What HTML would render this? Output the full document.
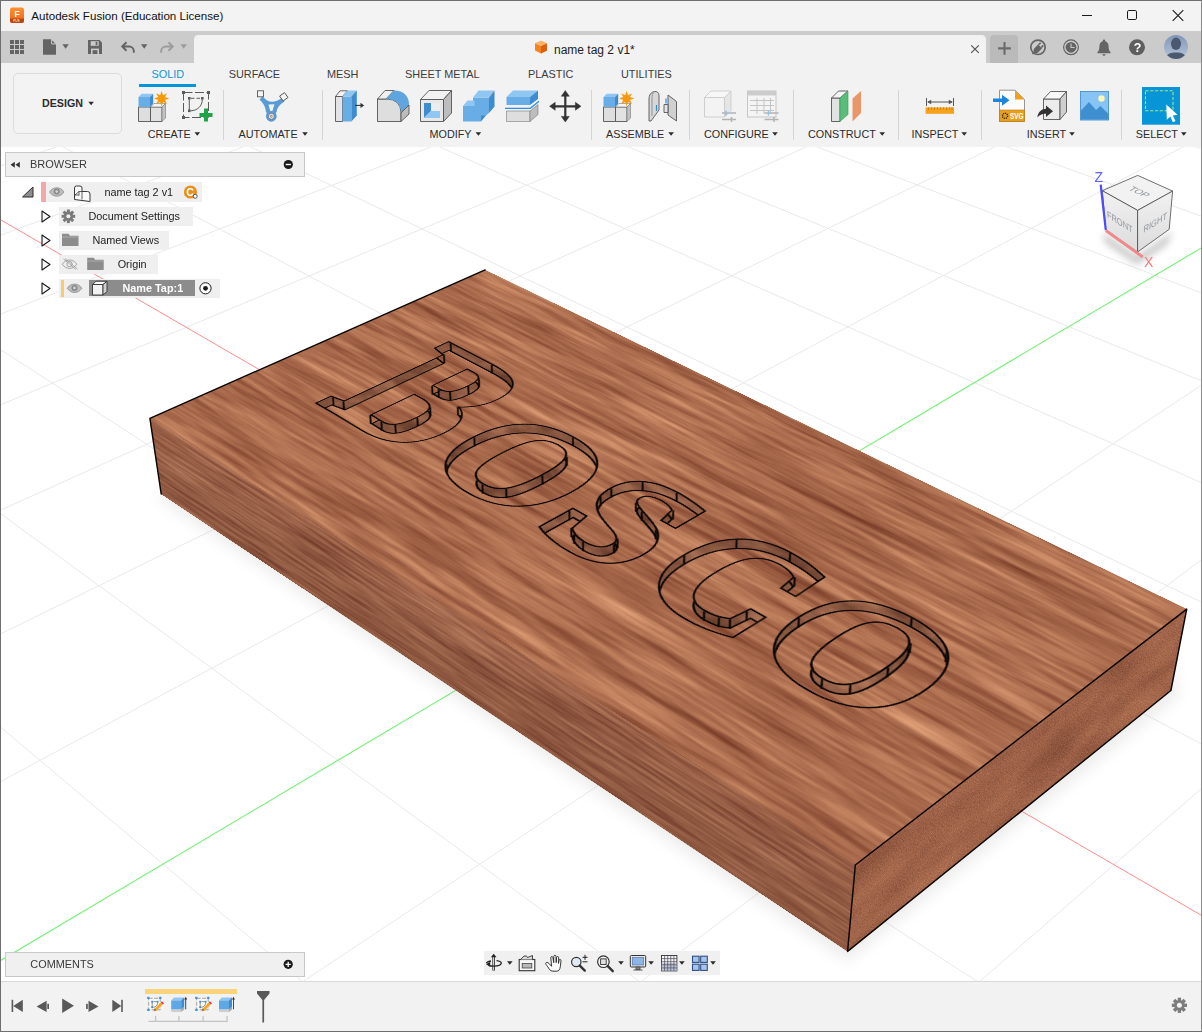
<!DOCTYPE html>
<html><head><meta charset="utf-8"><title>Autodesk Fusion</title>
<style>
*{box-sizing:border-box;margin:0;padding:0}
html,body{width:1202px;height:1032px;overflow:hidden;background:#f2f2f2;font-family:"Liberation Sans",sans-serif;}
#win{position:absolute;left:0;top:0;width:1202px;height:1032px;overflow:hidden;background:#f2f2f2}
#grid,#edges{position:absolute;left:0;top:0}
.face{position:absolute;left:0;top:0;transform-origin:0 0;overflow:hidden}
.face svg{display:block}
#titlebar{position:absolute;left:0;top:0;width:1202px;height:31px;background:#f3f3f3}
#title{position:absolute;left:31.3px;top:9.3px;font-size:11.6px;color:#111;white-space:nowrap;letter-spacing:0}
#qat{position:absolute;left:0;top:31px;width:1202px;height:32px;background:#cbcbcb}
#doctab{position:absolute;left:194px;top:35px;width:792px;height:28px;background:#f2f2f2;border-radius:4.5px 4.5px 0 0}
#toolbar{position:absolute;left:0;top:63px;width:1202px;height:84px;background:#f2f2f2}
.abs{position:absolute}
.tabl{position:absolute;top:68.4px;font-size:10.9px;color:#3c3c3c;white-space:nowrap}
.grpl{position:absolute;top:127.7px;font-size:10.8px;color:#2b2b2b;white-space:nowrap}
.sep{position:absolute;top:90px;width:1px;height:50px;background:#d4d4d4}
#timeline{position:absolute;left:0;top:981px;width:1202px;height:51px;background:#f2f2f2;border-top:1px solid #d9d9d9}
#border{position:absolute;left:0;top:0;width:1202px;height:1032px;border:1px solid #6e6e6e;border-right-color:#8a8a8a;pointer-events:none}
.panelhdr{position:absolute;background:#f0f0f0;border:1px solid #c8c8c8;font-size:11.3px;color:#3a3a3a}
.row{position:absolute;height:19px;background:#efefef}
.rowt{position:absolute;font-size:10.85px;color:#222;white-space:nowrap}
#icons{position:absolute;left:0;top:0}
</style></head>
<body><div id="win">
<svg id="grid" width="1202" height="1032" viewBox="0 0 1202 1032">
<defs>
<clipPath id="vp"><rect x="1" y="147" width="1200" height="834"/></clipPath>
<filter id="blur8" x="-20%" y="-20%" width="140%" height="140%"><feGaussianBlur stdDeviation="7"/></filter>
</defs>
<rect x="1" y="147" width="1200" height="834" fill="#fff"/>
<g clip-path="url(#vp)">
<g stroke="#e9e9e9" stroke-width="1" fill="none"><line x1="893.9" y1="-586.1" x2="-18080.3" y2="2156.8"/><line x1="323.3" y1="-584.4" x2="21418.2" y2="2322.2"/><line x1="926.1" y1="-582.6" x2="-19998.5" y2="2518.9"/><line x1="291.3" y1="-580.6" x2="23812.9" y2="2746.5"/><line x1="959.0" y1="-579.0" x2="-22433.5" y2="2978.6"/><line x1="258.6" y1="-576.8" x2="26930.4" y2="3299.0"/><line x1="992.8" y1="-575.3" x2="-25626.6" y2="3581.4"/><line x1="225.1" y1="-573.0" x2="31156.4" y2="4047.8"/><line x1="1027.3" y1="-571.5" x2="-29997.0" y2="4406.4"/><line x1="190.9" y1="-569.0" x2="37209.7" y2="5120.5"/><line x1="1062.7" y1="-567.7" x2="-36343.2" y2="5604.5"/><line x1="155.9" y1="-564.9" x2="46602.7" y2="6784.9"/><line x1="1098.9" y1="-563.7" x2="-46396.5" y2="7502.3"/><line x1="120.0" y1="-560.8" x2="63151.7" y2="9717.5"/><line x1="1136.0" y1="-559.7" x2="-64744.5" y2="10966.0"/><line x1="83.2" y1="-556.5" x2="100066.3" y2="16258.9"/><line x1="1174.1" y1="-555.5" x2="-108863.0" y2="19294.7"/><line x1="45.6" y1="-552.1" x2="128214.8" y2="21701.0"/><line x1="1213.1" y1="-551.3" x2="-123892.7" y2="22743.5"/><line x1="7.0" y1="-547.6" x2="122515.2" y2="21432.7"/><line x1="1253.0" y1="-546.9" x2="-120788.4" y2="22934.0"/><line x1="-32.6" y1="-543.0" x2="116957.3" y2="21171.1"/><line x1="1294.1" y1="-542.4" x2="-117629.2" y2="23127.9"/><line x1="-73.1" y1="-538.3" x2="111535.7" y2="20915.9"/><line x1="1336.2" y1="-537.8" x2="-114413.8" y2="23325.2"/><line x1="-114.7" y1="-533.5" x2="106245.5" y2="20666.8"/><line x1="1379.4" y1="-533.1" x2="-111140.6" y2="23526.0"/><line x1="-157.4" y1="-528.6" x2="101082.0" y2="20423.8"/><line x1="1423.8" y1="-528.2" x2="-107808.1" y2="23730.5"/><line x1="-201.2" y1="-523.5" x2="96040.7" y2="20186.5"/><line x1="1469.3" y1="-523.3" x2="-104414.6" y2="23938.7"/><line x1="-246.2" y1="-518.2" x2="91117.3" y2="19954.7"/><line x1="1516.2" y1="-518.1" x2="-100958.4" y2="24150.7"/><line x1="-292.4" y1="-512.9" x2="101795.2" y2="23348.2"/><line x1="1564.3" y1="-512.9" x2="-82459.8" y2="20602.7"/><line x1="-339.9" y1="-507.4" x2="96074.0" y2="23040.1"/><line x1="1613.9" y1="-507.5" x2="-79291.6" y2="20759.7"/><line x1="-388.7" y1="-501.7" x2="90504.2" y2="22740.2"/><line x1="1664.8" y1="-501.9" x2="-76072.3" y2="20919.2"/><line x1="-438.9" y1="-495.9" x2="85079.9" y2="22448.1"/><line x1="1717.3" y1="-496.2" x2="-72800.7" y2="21081.2"/><line x1="-490.5" y1="-489.9" x2="79795.4" y2="22163.6"/><line x1="1771.3" y1="-490.3" x2="-69475.5" y2="21246.0"/><line x1="-543.6" y1="-483.7" x2="74645.3" y2="21886.2"/><line x1="1826.9" y1="-484.2" x2="-66095.4" y2="21413.4"/><line x1="-598.3" y1="-477.4" x2="69624.7" y2="21615.9"/><line x1="1884.2" y1="-477.9" x2="-62659.0" y2="21583.7"/><line x1="-654.7" y1="-470.8" x2="64728.6" y2="21352.2"/><line x1="1943.3" y1="-471.5" x2="-59164.9" y2="21756.8"/><line x1="-712.7" y1="-464.1" x2="59952.6" y2="21095.1"/><line x1="2004.3" y1="-464.8" x2="-55611.6" y2="21932.8"/><line x1="-772.6" y1="-457.1" x2="55292.2" y2="20844.1"/><line x1="2067.2" y1="-457.9" x2="-51997.6" y2="22111.8"/><line x1="-834.3" y1="-450.0" x2="50743.3" y2="20599.2"/><line x1="2132.2" y1="-450.8" x2="-48321.3" y2="22294.0"/><line x1="-898.0" y1="-442.6" x2="46302.0" y2="20360.0"/><line x1="2199.4" y1="-443.5" x2="-44581.2" y2="22479.3"/><line x1="-963.8" y1="-434.9" x2="41964.4" y2="20126.5"/><line x1="2268.8" y1="-435.9" x2="-40775.5" y2="22667.8"/><line x1="-1031.7" y1="-427.1" x2="44679.1" y2="23544.0"/><line x1="2414.8" y1="-420.0" x2="-32960.3" y2="23055.0"/><line x1="-1174.5" y1="-410.5" x2="34909.8" y2="22931.5"/><line x1="2491.7" y1="-411.6" x2="-28947.2" y2="23253.8"/><line x1="-1249.7" y1="-401.8" x2="30216.4" y2="22637.2"/><line x1="2571.4" y1="-402.9" x2="-24861.2" y2="23456.2"/><line x1="-1327.4" y1="-392.7" x2="25643.7" y2="22350.5"/><line x1="2654.0" y1="-393.9" x2="-20700.3" y2="23662.3"/><line x1="-1408.0" y1="-383.4" x2="21187.3" y2="22071.1"/><line x1="2739.7" y1="-384.5" x2="-16462.4" y2="23872.3"/><line x1="-1491.5" y1="-373.7" x2="16842.8" y2="21798.7"/><line x1="2828.7" y1="-374.8" x2="-9862.6" y2="20357.2"/><line x1="-1578.1" y1="-363.6" x2="12606.0" y2="21533.1"/><line x1="2921.2" y1="-364.7" x2="-6107.3" y2="20512.5"/><line x1="-1668.1" y1="-353.2" x2="8472.9" y2="21273.9"/><line x1="3017.3" y1="-354.2" x2="-2291.2" y2="20670.2"/><line x1="-1761.4" y1="-342.3" x2="4439.8" y2="21021.1"/><line x1="3117.3" y1="-343.2" x2="1586.9" y2="20830.6"/><line x1="-1858.5" y1="-331.1" x2="503.1" y2="20774.2"/><line x1="3221.4" y1="-331.9" x2="5528.7" y2="20993.6"/><line x1="-1959.5" y1="-319.4" x2="-3340.6" y2="20533.2"/><line x1="3330.0" y1="-320.0" x2="9535.8" y2="21159.3"/><line x1="-2064.6" y1="-307.1" x2="-7094.6" y2="20297.9"/><line x1="3443.2" y1="-307.6" x2="13609.6" y2="21327.7"/><line x1="-2174.2" y1="-294.4" x2="-12310.3" y2="23739.3"/><line x1="3561.4" y1="-294.7" x2="17752.1" y2="21499.0"/><line x1="-2288.4" y1="-281.2" x2="-16492.5" y2="23426.7"/><line x1="3684.9" y1="-281.2" x2="21964.8" y2="21673.2"/><line x1="-2407.7" y1="-267.3" x2="-20564.4" y2="23122.3"/><line x1="3814.2" y1="-267.1" x2="26249.6" y2="21850.3"/><line x1="-2532.2" y1="-252.9" x2="-24530.1" y2="22825.8"/><line x1="3949.5" y1="-252.3" x2="30608.4" y2="22030.6"/><line x1="-2662.5" y1="-237.7" x2="-28393.9" y2="22537.0"/><line x1="4091.4" y1="-236.8" x2="35043.1" y2="22213.9"/><line x1="-2798.9" y1="-221.9" x2="-32159.5" y2="22255.5"/><line x1="4240.3" y1="-220.6" x2="39555.7" y2="22400.5"/><line x1="-2941.8" y1="-205.3" x2="-35830.7" y2="21981.1"/></g>
<line x1="-1101.9" y1="-418.9" x2="39729.0" y2="23233.6" stroke="#ff8c8c" stroke-width="1"/>
<line x1="2340.5" y1="-428.1" x2="-36902.5" y2="22859.7" stroke="#7df07d" stroke-width="1.2"/>
<polygon points="157.2,498.0 847.6,961.4 1178.9,696.5 1170.9,660.5 487.9,340.6" fill="#8a8480" opacity="0.14" filter="url(#blur8)"/>
<polygon points="485.1,269.9 149.9,418.3 161.2,494.0 847.6,951.4 1170.9,690.5 1186.7,609.1" fill="#a2644a"/>
</g>
</svg>
<div id="topface" class="face" style="width:1000px;height:500px;transform:matrix3d(0.433727421,0.201719515,0,-0.000225726467,-0.703676503,0.203516032,0,-0.000222788714,0,0,1,0,485.077873,269.915069,0,1)">
<svg width="1000" height="500" viewBox="0 0 1000 500" font-family="'Liberation Serif',serif" font-weight="bold" stroke-linejoin="miter" stroke-miterlimit="3">
<defs>
<filter id="woodtop" filterUnits="userSpaceOnUse" x="0" y="0" width="1000" height="500" color-interpolation-filters="sRGB">
<feTurbulence type="fractalNoise" baseFrequency="0.009 0.13" numOctaves="4" seed="7"/><feColorMatrix type="matrix" values="1 0 0 0 0 0 1 0 0 0 0 0 1 0 0 0 0 0 0 1" result="n1"/>
<feTurbulence type="fractalNoise" baseFrequency="0.004 0.045" numOctaves="3" seed="11"/><feColorMatrix type="matrix" values="1 0 0 0 0 0 1 0 0 0 0 0 1 0 0 0 0 0 0 1" result="n2"/>
<feComposite in="n1" in2="n2" operator="arithmetic" k1="0" k2="0.65" k3="0.55" k4="-0.1" result="n"/>
<feColorMatrix in="n" type="matrix" values="0.5067 0 0 0 0.4133  0.4867 0 0 0 0.1782  0.3933 0 0 0 0.1073  0 0 0 0 1" result="w"/></filter>
<filter id="woodtxt" filterUnits="userSpaceOnUse" x="0" y="0" width="1000" height="500" color-interpolation-filters="sRGB">
<feTurbulence type="fractalNoise" baseFrequency="0.009 0.13" numOctaves="4" seed="7"/><feColorMatrix type="matrix" values="1 0 0 0 0 0 1 0 0 0 0 0 1 0 0 0 0 0 0 1" result="n1"/>
<feTurbulence type="fractalNoise" baseFrequency="0.004 0.045" numOctaves="3" seed="11"/><feColorMatrix type="matrix" values="1 0 0 0 0 0 1 0 0 0 0 0 1 0 0 0 0 0 0 1" result="n2"/>
<feComposite in="n1" in2="n2" operator="arithmetic" k1="0" k2="0.65" k3="0.55" k4="-0.1" result="n"/>
<feColorMatrix in="n" type="matrix" values="0.5067 0 0 0 0.4133  0.4867 0 0 0 0.1782  0.3933 0 0 0 0.1073  0 0 0 0 1" result="w"/><feComposite in="w" in2="SourceAlpha" operator="in"/></filter>
<filter id="woodwall" filterUnits="userSpaceOnUse" x="0" y="0" width="1000" height="500" color-interpolation-filters="sRGB">
<feTurbulence type="fractalNoise" baseFrequency="0.03 0.05" numOctaves="4" seed="3"/><feColorMatrix type="matrix" values="1 0 0 0 0 0 1 0 0 0 0 0 1 0 0 0 0 0 0 1" result="n1"/>
<feTurbulence type="fractalNoise" baseFrequency="0.01 0.02" numOctaves="3" seed="5"/><feColorMatrix type="matrix" values="1 0 0 0 0 0 1 0 0 0 0 0 1 0 0 0 0 0 0 1" result="n2"/>
<feComposite in="n1" in2="n2" operator="arithmetic" k1="0" k2="0.65" k3="0.55" k4="-0.1" result="n"/>
<feColorMatrix in="n" type="matrix" values="0.5271 0 0 0 0.2620  0.4141 0 0 0 0.1263  0.3263 0 0 0 0.0800  0 0 0 0 1" result="w"/><feComposite in="w" in2="SourceAlpha" operator="in"/></filter>
<mask id="tmask" maskUnits="userSpaceOnUse" x="0" y="0" width="1000" height="500"><text y="344.00" fill="#fff" stroke="#fff" stroke-width="10.0"><tspan x="105.29" font-size="282.80" textLength="148.92" lengthAdjust="spacingAndGlyphs">B</tspan><tspan x="277.88" font-size="212.80" textLength="161.24" lengthAdjust="spacingAndGlyphs">O</tspan><tspan x="452.79" font-size="212.80" textLength="117.16" lengthAdjust="spacingAndGlyphs">S</tspan><tspan x="592.60" font-size="212.80" textLength="139.07" lengthAdjust="spacingAndGlyphs">C</tspan><tspan x="740.81" font-size="212.80" textLength="162.39" lengthAdjust="spacingAndGlyphs">O</tspan></text></mask>
</defs>
<rect width="1000" height="500" fill="#a9694b"/>
<rect width="1000" height="500" filter="url(#woodtop)"/>
<g>
<text y="344.00" fill="#0b0603" stroke="#0b0603" stroke-width="14.6"><tspan x="105.29" font-size="282.80" textLength="148.92" lengthAdjust="spacingAndGlyphs">B</tspan><tspan x="277.88" font-size="212.80" textLength="161.24" lengthAdjust="spacingAndGlyphs">O</tspan><tspan x="452.79" font-size="212.80" textLength="117.16" lengthAdjust="spacingAndGlyphs">S</tspan><tspan x="592.60" font-size="212.80" textLength="139.07" lengthAdjust="spacingAndGlyphs">C</tspan><tspan x="740.81" font-size="212.80" textLength="162.39" lengthAdjust="spacingAndGlyphs">O</tspan></text>
<g filter="url(#woodwall)"><text y="344.00" fill="#85543d" stroke="#85543d" stroke-width="10.0"><tspan x="105.29" font-size="282.80" textLength="148.92" lengthAdjust="spacingAndGlyphs">B</tspan><tspan x="277.88" font-size="212.80" textLength="161.24" lengthAdjust="spacingAndGlyphs">O</tspan><tspan x="452.79" font-size="212.80" textLength="117.16" lengthAdjust="spacingAndGlyphs">S</tspan><tspan x="592.60" font-size="212.80" textLength="139.07" lengthAdjust="spacingAndGlyphs">C</tspan><tspan x="740.81" font-size="212.80" textLength="162.39" lengthAdjust="spacingAndGlyphs">O</tspan></text></g>
<g mask="url(#tmask)">
<text y="355.35" fill="#0b0603" stroke="#0b0603" stroke-width="14.5"><tspan x="120.93" font-size="280.11" textLength="147.50" lengthAdjust="spacingAndGlyphs">B</tspan><tspan x="291.87" font-size="210.78" textLength="159.71" lengthAdjust="spacingAndGlyphs">O</tspan><tspan x="465.12" font-size="210.78" textLength="116.05" lengthAdjust="spacingAndGlyphs">S</tspan><tspan x="603.60" font-size="210.78" textLength="137.75" lengthAdjust="spacingAndGlyphs">C</tspan><tspan x="750.39" font-size="210.78" textLength="160.84" lengthAdjust="spacingAndGlyphs">O</tspan></text>
<g filter="url(#woodtxt)"><text y="355.35" fill="#a9694b" stroke="#a9694b" stroke-width="9.9"><tspan x="120.93" font-size="280.11" textLength="147.50" lengthAdjust="spacingAndGlyphs">B</tspan><tspan x="291.87" font-size="210.78" textLength="159.71" lengthAdjust="spacingAndGlyphs">O</tspan><tspan x="465.12" font-size="210.78" textLength="116.05" lengthAdjust="spacingAndGlyphs">S</tspan><tspan x="603.60" font-size="210.78" textLength="137.75" lengthAdjust="spacingAndGlyphs">C</tspan><tspan x="750.39" font-size="210.78" textLength="160.84" lengthAdjust="spacingAndGlyphs">O</tspan></text></g>
<g stroke="#0b0603" stroke-width="2" fill="none"><path d="M196.0 204.5L210.8 217.2"/><path d="M191.5 184.2L206.4 197.1"/><path d="M167.2 233.5L182.2 245.9"/><path d="M178.1 233.5L193.1 245.9"/><path d="M191.4 227.9L206.2 240.3"/><path d="M207.0 290.0L221.7 301.9"/><path d="M200.9 265.8L215.6 277.9"/><path d="M167.2 324.1L182.2 335.6"/><path d="M186.9 324.6L201.7 336.2"/><path d="M201.6 317.2L216.3 328.8"/><path d="M108.0 329.0L123.6 340.5"/><path d="M122.9 326.1L138.3 337.6"/><path d="M122.9 176.6L138.3 189.6"/><path d="M109.0 153.8L124.6 167.0"/><path d="M180.0 153.8L194.9 167.0"/><path d="M221.8 243.4L236.3 255.7"/><path d="M358.5 330.7L371.8 342.2"/><path d="M382.3 318.8L395.3 330.4"/><path d="M390.4 274.2L403.3 286.2"/><path d="M382.3 230.1L395.3 242.6"/><path d="M283.0 273.9L297.0 285.9"/><path d="M358.7 198.1L371.9 210.8"/><path d="M302.4 331.2L316.2 342.7"/><path d="M459.0 301.3L471.3 313.1"/><path d="M482.3 321.3L494.3 332.8"/><path d="M492.6 327.5L504.5 339.0"/><path d="M508.8 330.6L520.6 342.1"/><path d="M533.4 311.0L544.9 322.7"/><path d="M529.3 301.7L540.9 313.5"/><path d="M463.4 260.1L475.6 272.3"/><path d="M459.8 240.8L472.1 253.1"/><path d="M474.3 208.6L486.5 221.3"/><path d="M513.5 198.1L525.3 210.8"/><path d="M533.6 224.6L545.1 237.1"/><path d="M496.2 241.3L508.1 253.6"/><path d="M512.2 249.1L524.0 261.3"/><path d="M545.6 263.1L557.0 275.2"/><path d="M597.0 275.8L608.0 287.8"/><path d="M615.5 218.1L626.2 230.6"/><path d="M669.2 198.1L679.5 210.8"/><path d="M699.4 226.2L709.3 238.7"/><path d="M674.5 330.4L684.7 341.9"/><path d="M691.2 327.6L701.2 339.1"/><path d="M700.7 322.3L710.7 333.9"/><path d="M703.5 301.4L713.4 313.1"/><path d="M822.1 330.7L830.9 342.2"/><path d="M846.0 318.8L854.6 330.4"/><path d="M854.2 274.2L862.7 286.2"/><path d="M846.0 230.1L854.6 242.6"/><path d="M746.0 274.3L755.5 286.3"/><path d="M822.2 198.1L831.0 210.8"/><path d="M878.4 217.4L886.7 230.0"/></g>
</g>
</g>
</svg></div>
<div id="leftface" class="face" style="width:1000px;height:100px;transform:matrix3d(0.488098882,0.227006791,0,-0.00025402322,0.152110334,0.879405047,0,0.000247115136,0,0,1,0,149.942354,418.265501,0,1)">
<svg width="1000" height="100" viewBox="0 0 1000 100"><defs><filter id="woodleft" x="0" y="0" width="100%" height="100%" color-interpolation-filters="sRGB">
<feTurbulence type="fractalNoise" baseFrequency="0.012 0.24" numOctaves="4" seed="5"/><feColorMatrix type="matrix" values="1 0 0 0 0 0 1 0 0 0 0 0 1 0 0 0 0 0 0 1" result="n1"/>
<feTurbulence type="fractalNoise" baseFrequency="0.005 0.06" numOctaves="2" seed="13"/><feColorMatrix type="matrix" values="1 0 0 0 0 0 1 0 0 0 0 0 1 0 0 0 0 0 0 1" result="n2"/>
<feComposite in="n1" in2="n2" operator="arithmetic" k1="0" k2="0.7" k3="0.5" k4="-0.1" result="n"/>
<feColorMatrix in="n" type="matrix" values="0.4353 0 0 0 0.3902  0.4118 0 0 0 0.1745  0.3294 0 0 0 0.1176  0 0 0 0 1"/>
</filter>
<linearGradient id="lfg" x1="0" y1="0" x2="0" y2="1"><stop offset="0" stop-color="#000" stop-opacity="0"/><stop offset="1" stop-color="#2a1208" stop-opacity="0.12"/></linearGradient></defs>
<rect width="1000" height="100" fill="#a06246"/>
<rect width="1000" height="100" filter="url(#woodleft)"/>
<rect width="1000" height="100" fill="url(#lfg)"/>
</svg></div>
<div id="rightface" class="face" style="width:500px;height:100px;transform:matrix3d(1.06154565,-0.307018291,0,0.000336092492,0.203907599,1.17886383,0,0.000331263845,0,0,1,0,855.30978,865.003187,0,1)">
<svg width="500" height="100" viewBox="0 0 500 100"><defs>
<filter id="woodend" x="0" y="0" width="100%" height="100%" color-interpolation-filters="sRGB">
<feTurbulence type="fractalNoise" baseFrequency="0.9 0.9" numOctaves="2" seed="3"/><feColorMatrix type="matrix" values="1 0 0 0 0 0 1 0 0 0 0 0 1 0 0 0 0 0 0 1" result="n1"/>
<feTurbulence type="fractalNoise" baseFrequency="0.012 0.03" numOctaves="2" seed="9"/><feColorMatrix type="matrix" values="1 0 0 0 0 0 1 0 0 0 0 0 1 0 0 0 0 0 0 1" result="n2"/>
<feComposite in="n1" in2="n2" operator="arithmetic" k1="0" k2="0.55" k3="0.3" k4="0.075" result="n"/>
<feColorMatrix in="n" type="matrix" values="0.5882 0 0 0 0.2941  0.4706 0 0 0 0.1255  0.3647 0 0 0 0.0804  0 0 0 0 1"/>
</filter></defs>
<rect width="500" height="100" fill="#96593f"/>
<rect width="500" height="100" filter="url(#woodend)"/>
</svg></div>
<svg id="edges" width="1202" height="1032" viewBox="0 0 1202 1032">
<g stroke="#080402" stroke-width="1.45" fill="none" stroke-linejoin="round" stroke-linecap="round">
<polyline points="485.1,269.9 149.9,418.3 161.2,494.0"/>
<polygon points="855.3,865.0 1186.7,609.1 1170.9,690.5 847.6,951.4"/>
</g></svg>
<div id="titlebar"></div>
<div id="title">Autodesk Fusion (Education License)</div>
<div id="qat"></div>
<div id="doctab"></div>
<div class="abs" style="left:990px;top:35px;width:28px;height:28px;background:#bababa;border-radius:4px 4px 0 0"></div>
<div class="abs" id="doctitle" style="left:554px;top:43px;font-size:12px;color:#222;white-space:nowrap">name tag 2 v1*</div>
<div id="toolbar"></div>
<div class="abs" style="left:13px;top:73px;width:109px;height:61px;border:1px solid #dcdcdc;border-radius:5px;background:#f3f3f3"></div>
<div class="abs" id="design" style="left:42px;top:97px;font-size:10.7px;font-weight:bold;color:#2d2d2d;white-space:nowrap">DESIGN</div>
<div class="tabl" id="t_solid" style="left:151.5px;color:#0e96d8">SOLID</div>
<div class="abs" style="left:139.3px;top:83.7px;width:57px;height:3px;background:#0696d7"></div>
<div class="tabl" id="t_surface" style="left:228.7px">SURFACE</div>
<div class="tabl" id="t_mesh" style="left:327px">MESH</div>
<div class="tabl" id="t_sheet" style="left:405px">SHEET METAL</div>
<div class="tabl" id="t_plastic" style="left:528px">PLASTIC</div>
<div class="tabl" id="t_util" style="left:621px">UTILITIES</div>
<div class="grpl" id="g_create" style="left:147.8px">CREATE</div>
<div class="grpl" id="g_automate" style="left:238.6px">AUTOMATE</div>
<div class="grpl" id="g_modify" style="left:429.5px">MODIFY</div>
<div class="grpl" id="g_assemble" style="left:606px">ASSEMBLE</div>
<div class="grpl" id="g_configure" style="left:704px">CONFIGURE</div>
<div class="grpl" id="g_construct" style="left:808px">CONSTRUCT</div>
<div class="grpl" id="g_inspect" style="left:911.5px">INSPECT</div>
<div class="grpl" id="g_insert" style="left:1026.8px">INSERT</div>
<div class="grpl" id="g_select" style="left:1135.8px">SELECT</div>
<div class="sep" style="left:222.5px"></div>
<div class="sep" style="left:322px"></div>
<div class="sep" style="left:590.5px"></div>
<div class="sep" style="left:688.5px"></div>
<div class="sep" style="left:793px"></div>
<div class="sep" style="left:897.5px"></div>
<div class="sep" style="left:980.5px"></div>
<div class="sep" style="left:1120.5px"></div>
<div class="panelhdr" style="left:5px;top:152px;width:300px;height:25px"></div>
<div class="abs" id="l_browser" style="left:30px;top:157.5px;font-size:11px;color:#3a3a3a">BROWSER</div>
<div class="row" style="left:41px;top:182px;width:160.5px;height:20px"></div>
<div class="abs" style="left:41px;top:182px;width:4.5px;height:20px;background:#f4a7a7"></div>
<div class="rowt" id="r1" style="left:104.4px;top:186px">name tag 2 v1</div>
<div class="row" style="left:59px;top:206.5px;width:133.5px"></div>
<div class="rowt" id="r2" style="left:88.4px;top:210px">Document Settings</div>
<div class="row" style="left:59px;top:230.5px;width:109.5px"></div>
<div class="rowt" id="r3" style="left:92.4px;top:234px">Named Views</div>
<div class="row" style="left:59px;top:254.5px;width:98.5px"></div>
<div class="rowt" id="r4" style="left:117.7px;top:258px">Origin</div>
<div class="row" style="left:59px;top:278.5px;width:160.5px"></div>
<div class="abs" style="left:61.2px;top:279.5px;width:3px;height:17px;background:#f7cd6b"></div>
<div class="abs" style="left:89.2px;top:280.3px;width:106px;height:15.4px;background:#8c8c8c"></div>
<div class="rowt" id="r5" style="left:122.5px;top:282px;color:#fff;font-weight:bold">Name Tap:1</div>
<div class="panelhdr" style="left:5px;top:952px;width:300px;height:25px"></div>
<div class="abs" id="l_comments" style="left:30.3px;top:958px;font-size:10.9px;color:#3a3a3a">COMMENTS</div>
<div class="abs" style="left:483.5px;top:951px;width:236px;height:23.5px;background:#f0f0f0"></div>
<div id="timeline"></div>
<div class="abs" style="left:144.8px;top:989.2px;width:92.2px;height:5px;background:#fad47a"></div>
<svg id="icons" width="1202" height="1032" viewBox="0 0 1202 1032" font-family="'Liberation Sans',sans-serif">
<defs>
<linearGradient id="gor" x1="0" y1="0" x2="0" y2="1"><stop offset="0" stop-color="#ff8f2e"/><stop offset="1" stop-color="#ee6418"/></linearGradient>
<linearGradient id="gav" x1="0" y1="0" x2="0" y2="1"><stop offset="0" stop-color="#7f95b8"/><stop offset="1" stop-color="#b9c6d8"/></linearGradient>
<clipPath id="avc"><circle cx="1176" cy="47" r="12"/></clipPath>
</defs>
<!-- title icon -->
<rect x="10" y="7.5" width="14" height="15.5" rx="2.2" fill="url(#gor)"/>
<path d="M10 18.5h14v2.3a2.2 2.2 0 0 1-2.2 2.2h-9.6a2.2 2.2 0 0 1-2.2-2.2z" fill="#b8470f"/>
<text x="14.2" y="17" font-size="9" font-weight="bold" fill="#fff">F</text>
<text x="13.2" y="22.2" font-size="3.2" font-weight="bold" fill="#ffd9b8">FUS</text>
<!-- window controls -->
<g stroke="#1a1a1a" stroke-width="1" fill="none">
<line x1="1082" y1="15.5" x2="1092" y2="15.5"/>
<rect x="1127.5" y="10.5" width="9" height="9" rx="1.3"/>
<path d="M1172.7 10.2l10.6 10.6M1183.3 10.2l-10.6 10.6" stroke-width="1.1"/>
</g>
<!-- QAT -->
<g fill="#646464">
<rect x="10" y="40" width="4" height="4"/><rect x="15" y="40" width="4" height="4"/><rect x="20" y="40" width="4" height="4"/>
<rect x="10" y="45" width="4" height="4"/><rect x="15" y="45" width="4" height="4"/><rect x="20" y="45" width="4" height="4"/>
<rect x="10" y="50" width="4" height="4"/><rect x="15" y="50" width="4" height="4"/><rect x="20" y="50" width="4" height="4"/>
<path d="M43 39.3h8l5 5v10.4h-13z"/>
<path d="M62.4 44.3h6.4l-3.2 4.4z"/>
<path d="M88 40h11.5l2.5 2.5v11.5h-14z"/>
<path d="M141 44.3h6.4l-3.2 4.4z"/>
</g>
<path d="M51.6 39.3v4.6h4.4" fill="none" stroke="#cbcbcb" stroke-width="1"/>
<rect x="90.7" y="41.2" width="8" height="4.6" fill="#cbcbcb"/><rect x="95.6" y="41.8" width="1.8" height="3.4" fill="#646464"/>
<rect x="91" y="48.6" width="8" height="5.4" fill="#cbcbcb"/><rect x="92.6" y="50.2" width="4.8" height="3.8" fill="#646464"/>
<path d="M126.5 42.3l-4.3 4.2 4.3 4.2M122.6 46.5h6.6a4.6 4.6 0 0 1 4.6 4.6v1.6" fill="none" stroke="#646464" stroke-width="1.9"/>
<path d="M168.5 42.3l4.3 4.2-4.3 4.2M172.4 46.5h-6.6a4.6 4.6 0 0 0-4.6 4.6v1.6" fill="none" stroke="#9c9c9c" stroke-width="1.9"/>
<path d="M180.5 44.3h6.4l-3.2 4.4z" fill="#9c9c9c"/>
<!-- doc tab -->
<g transform="translate(-6.5 0)"><path d="M541.5 43.5l6-2.7 6 2.7v7l-6 3-6-3z" fill="#f58220"/>
<path d="M541.5 43.5l6 2.8 6-2.8-6-2.7z" fill="#ffb469"/>
<path d="M547.5 46.3v7.2l6-3v-7z" fill="#d9610f"/></g>
<path d="M971.2 45.3l7.6 7.6M978.8 45.3l-7.6 7.6" stroke="#555" stroke-width="1.2" fill="none"/>
<path d="M1004.5 42v12.8M998.1 48.4h12.8" stroke="#6b6b6b" stroke-width="2.1" fill="none"/>
<!-- extension -->
<circle cx="1038" cy="47.3" r="7.2" fill="none" stroke="#646464" stroke-width="1.7"/>
<path d="M1034.6 49.2l3.4-3.6 3 2.8-3.4 3.6a2.1 2.1 0 0 1-3-2.8zM1038.6 44.8l2-2M1041.4 47.4l2-2M1034.8 51.6l-2.4 2.4" stroke="#646464" stroke-width="1.5" fill="#646464"/>
<!-- clock -->
<circle cx="1071" cy="47.3" r="7.4" fill="none" stroke="#646464" stroke-width="1.2"/>
<circle cx="1071" cy="47.3" r="5.4" fill="#646464"/>
<path d="M1071 43.6v3.9h3.6" stroke="#cbcbcb" stroke-width="1.1" fill="none"/>
<!-- bell -->
<path d="M1104 39.6a1.2 1.2 0 0 1 1.2 1.2v.5c2.3.6 3.4 2.6 3.4 5.2 0 3.4.8 4.6 2 5.8v.9h-13.2v-.9c1.2-1.2 2-2.4 2-5.8 0-2.6 1.100-4.600 3.400-5.200v-.5a1.200 1.200 0 0 1 1.200-1.200zM1102.400 54.200h3.200a1.600 1.600 0 0 1-3.200 0z" fill="#646464"/>
<!-- help -->
<circle cx="1137" cy="47.3" r="8" fill="#5e5e5e"/>
<text x="1133.700" y="51.800" font-size="12.500" font-weight="bold" fill="#fff">?</text>
<!-- avatar -->
<circle cx="1176" cy="47" r="12" fill="url(#gav)"/>
<g clip-path="url(#avc)" fill="#4a5870"><ellipse cx="1176" cy="43.800" rx="5" ry="6.200"/><path d="M1164.500 61c0-6 5-8.500 11.500-8.500s11.500 2.500 11.500 8.500z"/></g>
<!-- TOOLBAR ICONS -->
<defs>
<g id="newcomp">
<path d="M.5 16h12v14.500h-12z" fill="#dedede" stroke="#555" stroke-width=".9"/>
<path d="M12.500 16h11.500v14.500h-11.500z" fill="#e2e2e2" stroke="#555" stroke-width=".9"/>
<path d="M12.500 16l3.500-3.500h11.500l-3.500 3.500z" fill="#f4f4f4" stroke="#777" stroke-width=".6"/>
<path d="M24 16l3.500-3.500v14.500l-3.500 3.500z" fill="#c2c2c2" stroke="#777" stroke-width=".6"/>
<path d="M.5 6h11.500v10h-11.500z" fill="#69ade6"/>
<path d="M.5 6l3.200-3.200h11.500l-3.200 3.200z" fill="#8fc6f2"/>
<path d="M12 6l3.200-3.200v10l-3.200 3.200z" fill="#3e8ccf"/>
<path d="M23.600 0l1.500 4.200 3.900-2-2 3.900 4.200 1.500-4.200 1.500 2 3.900-3.900-2-1.500 4.200-1.500-4.200-3.900 2 2-3.900-4.200-1.500 4.200-1.500-2-3.900 3.900 2z" fill="#f59a0c"/>
</g>
<path id="dd" d="M0 0h5.600l-2.800 3.500z"/>
</defs>
<use href="#newcomp" x="138" y="91"/>
<!-- sketch -->
<rect x="183.500" y="92.500" width="25" height="25" fill="none" stroke="#5a5a5a" stroke-width="1" stroke-dasharray="9 2.500"/>
<g fill="#5a5a5a"><rect x="182" y="91" width="3" height="3"/><rect x="207" y="91" width="3" height="3"/><rect x="182" y="116" width="3" height="3"/>
<rect x="188" y="97" width="2.600" height="2.600"/><rect x="201" y="97" width="2.600" height="2.600"/><rect x="188" y="109.500" width="2.600" height="2.600"/></g>
<path d="M189.300 99.500v10.500" stroke="#5a5a5a" stroke-width="1" fill="none"/>
<path d="M191 98.300h10" stroke="#5a5a5a" stroke-width="1" fill="none" stroke-dasharray="3.500 2"/>
<path d="M202.300 99.600c0 6.500-5 11-11.500 11.200" stroke="#5a5a5a" stroke-width="1" fill="none"/>
<path d="M204 108.500h4v4.500h4.500v4h-4.500v4.500h-4v-4.500h-4.500v-4h4.500z" fill="#1ea446"/>
<!-- automate -->
<path d="M262.500 96.500c3 3 5.500 5 8.800 5.300 3.400.2 7.200-1.200 10.500-3.700l2.700 3.300c-4 2.600-7 5.200-7.800 10.100l-1.200 2.600h-8.400l-1.200-2.600c-.4-5-2.600-8.500-6.400-12z" fill="#5b9bd5"/>
<path d="M268.500 104.500l6-.2-2.300 7.200h-1.800z" fill="#f2f2f2"/>
<circle cx="271.300" cy="116.300" r="5.400" fill="#5b9bd5"/>
<circle cx="271.300" cy="116.300" r="3" fill="#e9e9e9" stroke="#666" stroke-width=".7"/>
<circle cx="271.300" cy="116.300" r="1" fill="none" stroke="#666" stroke-width=".7"/>
<rect x="257.500" y="90.800" width="6" height="6" fill="#f4f4f4" stroke="#555" stroke-width=".9"/>
<rect x="280.800" y="93.800" width="6" height="6" fill="#f4f4f4" stroke="#555" stroke-width=".9" transform="rotate(-35 283.800 96.800)"/>
<!-- press pull -->
<path d="M335.500 96.500h7.100v25h-7.100z" fill="#e4e4e4" stroke="#555" stroke-width=".9"/>
<path d="M335.500 96.500l4.600-5.700h7.400l-4.900 5.700z" fill="#f2f2f2" stroke="#555" stroke-width=".9"/>
<path d="M342.600 96.500h8.800v25h-8.800z" fill="#69ade6"/>
<path d="M342.600 96.500l4.900-6h9.300l-5.400 6z" fill="#8fc6f2"/>
<path d="M351.400 96.500l5.400-6v25l-5.400 6z" fill="#3e8ccf"/>
<path d="M355 105.400h7" stroke="#333" stroke-width="1.100"/><path d="M360.500 102.800l3.700 2.600-3.700 2.600z" fill="#333"/>
<!-- fillet -->
<path d="M377.500 99h8.500q15 0 15 14v8.500h-23.500z" fill="#dedede" stroke="#555" stroke-width=".9"/>
<path d="M377.500 99l7.500-8.500h9l-8 8.500z" fill="#f0f0f0" stroke="#555" stroke-width=".9"/>
<path d="M386 99l8-8.500q15 .5 15 14.500l-8 8q0-14-15-14z" fill="#5fa5e0"/>
<path d="M401 113l8-8v9l-8 7.500z" fill="#bdbdbd" stroke="#555" stroke-width=".9"/>
<!-- shell -->
<path d="M420.500 99.500h23v22h-23z" fill="#e8e8e8" stroke="#555" stroke-width=".9"/>
<path d="M420.500 99.500l8.500-9h22.500l-8 9z" fill="#f2f2f2" stroke="#555" stroke-width=".9"/>
<path d="M443.500 99.500l8-9v22.500l-8 8.500z" fill="#bdbdbd" stroke="#555" stroke-width=".9"/>
<rect x="424" y="103" width="16" height="15" fill="#ededed"/>
<path d="M424 103h7v8l-7 7z" fill="#3e8ccf"/><path d="M424 118l7-7h9v7z" fill="#8fc6f2"/>
<!-- combine -->
<path d="M473 97.500h16v15.500h-16z" fill="#69ade6"/><path d="M473 97.500l5.500-7h16l-5.500 7z" fill="#8fc6f2"/><path d="M489 97.500l5.500-7v16l-5.500 6.500z" fill="#3e8ccf"/>
<path d="M463 106h18v15.500h-18z" fill="#69ade6"/><path d="M463 106l4.500-5.500h7l0 5.500z" fill="#8fc6f2"/><path d="M481 106v15.500l5-6v-7z" fill="#3e8ccf"/><path d="M481 106h8v7l-3 2.500h-5z" fill="#69ade6"/>
<!-- split face -->
<path d="M506.500 97h23.500v8h-23.500z" fill="#69ade6"/><path d="M506.500 97l6.500-6.500h25l-8 6.500z" fill="#8fc6f2"/><path d="M530 97l8-6.500v8.500l-8 6z" fill="#3e8ccf"/>
<path d="M505 108.300h25.300l8.700-7" fill="none" stroke="#2e8de0" stroke-width="1.300"/>
<path d="M506.500 111h23.500v10.500h-23.500z" fill="#dedede" stroke="#777" stroke-width=".6"/><path d="M530 111l8-6.500v10l-8 7z" fill="#bdbdbd" stroke="#777" stroke-width=".6"/>
<!-- move -->
<g fill="#333" stroke="#333"><path d="M565.300 95v22.600M554 106.300h22.600" stroke-width="2.200"/>
<path d="M565.300 90.600l4 5.600h-8zM565.300 122l4-5.600h-8zM549.600 106.300l5.600-4v8zM581 106.300l-5.600-4v8z" stroke-width=".5"/></g>
<use href="#newcomp" x="603" y="91"/>
<!-- joint -->
<path d="M649 99c0-4 2-7 5.500-7.500 2.500-.3 4.500 1 4.500 4v14.500l-8 11h-2z" fill="#d8d8d8" stroke="#555" stroke-width=".9"/>
<path d="M654.500 92c-2 1-2.500 3-2.500 6v18" fill="none" stroke="#777" stroke-width=".7"/>
<path d="M668 95l8.500 6.500v19.500l-8.500-6z" fill="#d0d0d0" stroke="#555" stroke-width=".9"/>
<path d="M664 104.500h4v8h-4z" fill="#e4e4e4" stroke="#555" stroke-width=".9"/>
<path d="M656.500 105v6M666 98.500v5" stroke="#2e8de0" stroke-width="1.200"/>
<!-- configure (disabled) -->
<g opacity=".7">
<path d="M704.500 97.500h20v19.500h-20z" fill="#f4f4f4" stroke="#bbb" stroke-width=".9"/><path d="M704.500 97.500l6.500-6.500h20l-6.500 6.500z" fill="#fafafa" stroke="#bbb" stroke-width=".9"/><path d="M724.500 97.500l6.500-6.500v19.500l-6.500 6.500z" fill="#e0e0e0" stroke="#bbb" stroke-width=".9"/>
<path d="M722 113h14M722 119.500h14" stroke="#999" stroke-width="1.600"/><path d="M726 110.500v5" stroke="#6aaee8" stroke-width="1.600"/><path d="M731.500 117v5" stroke="#999" stroke-width="1.600"/>
<rect x="747.500" y="91" width="28.500" height="26" fill="#f6f6f6" stroke="#aaa" stroke-width=".9"/><rect x="747.500" y="91" width="28.500" height="4.500" fill="#bdbdbd"/>
<path d="M750 100.500h24M750 105.500h24M750 110.500h24M757 98v16M764 98v16M770.500 98v16" stroke="#aaa" stroke-width=".9"/>
<path d="M764.500 113h14M764.500 119.500h14" stroke="#999" stroke-width="1.600"/><path d="M768.500 110.500v5" stroke="#6aaee8" stroke-width="1.600"/><path d="M774 117v5" stroke="#999" stroke-width="1.600"/>
</g>
<!-- construct -->
<path d="M831.500 98h8.500v23.500h-8.500z" fill="#e2e2e2" stroke="#555" stroke-width=".9"/><path d="M831.500 98l7-7h9.500l-8 7z" fill="#f4f4f4" stroke="#555" stroke-width=".9"/>
<path d="M840 98l8-7v23.500l-8 7z" fill="#58be7a" stroke="#3e9b5c" stroke-width=".6"/>
<path d="M852.500 98.500l8.500-7.500v22l-8.500 8.500z" fill="#e99768"/>
<!-- inspect -->
<rect x="925.600" y="107.400" width="28.400" height="6.400" fill="#f5a31d"/>
<path d="M928.500 107.400v2.600M931.500 107.400v2M934.500 107.400v2.600M937.500 107.400v2M940.500 107.400v2.600M943.500 107.400v2M946.500 107.400v2.600M949.500 107.400v2M952 107.400v2.600" stroke="#b8700a" stroke-width=".7"/>
<path d="M926.500 98v8M953.500 98v8M928 102h24" stroke="#555" stroke-width="1"/><path d="M927.200 102l4-2.200v4.400zM952.800 102l-4-2.200v4.400z" fill="#555"/>
<!-- insert svg -->
<path d="M999.500 90.200h15.500l9.500 9.300v22h-25z" fill="#fcfcfc" stroke="#8a8a8a" stroke-width=".9"/>
<path d="M1015 90.200l9.500 9.300h-9.500z" fill="#f0a020"/>
<rect x="999.500" y="110" width="25" height="11.500" fill="#e8a01c" stroke="#b87810" stroke-width=".6"/>
<text x="1010" y="119" font-size="8.200" font-weight="bold" fill="#fff" textLength="13.500" lengthAdjust="spacingAndGlyphs">SVG</text>
<circle cx="1005" cy="115.800" r="2.600" fill="none" stroke="#3a2a08" stroke-width="1.400" stroke-dasharray="1.200 .800"/>
<path d="M993 98.500h9v-3.700l7.500 5.500-7.500 5.500v-3.700h-9z" fill="#1c86dc"/>
<!-- derive -->
<path d="M1043.500 99h16.500v20.500h-16.500z" fill="#ececec" stroke="#555" stroke-width=".9"/><path d="M1043.500 99l7-7.500h16l-6.500 7.500z" fill="#f8f8f8" stroke="#555" stroke-width=".9"/><path d="M1060 99l6.500-7.500v20.500l-6.500 7.500z" fill="#cfcfcf" stroke="#555" stroke-width=".9"/>
<path d="M1037.300 117.500c1-6 4.500-8.500 8.700-8.700v-3.300l7 5.800-7 5.800v-3.400c-3.500-.2-6.200.8-8.700 3.800z" fill="#333"/>
<!-- image -->
<rect x="1080.500" y="91.500" width="28" height="28.500" fill="#86c4f6" stroke="#4a8fd0" stroke-width=".9"/>
<path d="M1081 110.500l8-8.500 7 8 4.500-4 8 8v5.500h-27.500z" fill="#3f8fd0"/>
<circle cx="1101.500" cy="98.500" r="3.200" fill="#fdf6b8"/>
<!-- select -->
<rect x="1142" y="87" width="38" height="37.700" fill="#0696d7"/>
<rect x="1145.500" y="90.800" width="27.500" height="20" fill="none" stroke="#a6e38c" stroke-width="1.100" stroke-dasharray="3.200 1.600"/>
<path d="M1166.300 104.500l11.200 10.300-4.700.7 2.700 5.600-2.600 1.200-2.600-5.700-3.500 3.200z" fill="#fff"/>
<!-- dropdown arrows -->
<g fill="#2b2b2b">
<use href="#dd" x="88.300" y="101.700"/>
<use href="#dd" x="194.500" y="132.300"/><use href="#dd" x="302.200" y="132.300"/><use href="#dd" x="475.600" y="132.300"/><use href="#dd" x="668.300" y="132.300"/>
<use href="#dd" x="772.200" y="132.300"/><use href="#dd" x="879.400" y="132.300"/><use href="#dd" x="961.400" y="132.300"/><use href="#dd" x="1069.200" y="132.300"/><use href="#dd" x="1181" y="132.300"/>
</g>
<!-- BROWSER PANEL ICONS -->
<path d="M14.800 161.800v6l-4.300-3zM19.800 161.800v6l-4.300-3z" fill="#333"/>
<circle cx="288.300" cy="164.500" r="4.600" fill="#1a1a1a"/><rect x="285.700" y="163.800" width="5.200" height="1.400" fill="#fff"/>
<path d="M33 187v10h-10.500z" fill="#8e8e8e" stroke="#2a2a2a" stroke-width="1"/>
<g id="eye1"><path d="M49.500 192c3.500-5.600 11-5.600 14.500 0-3.500 5.600-11 5.600-14.500 0z" fill="#bdbdbd" stroke="#8a8a8a" stroke-width=".8"/><circle cx="56.700" cy="191.600" r="3" fill="#8a8a8a"/><circle cx="56.700" cy="191.600" r="1.300" fill="#d8d8d8"/></g>
<path d="M74.500 199.500v-11.500q0-2 2-2h3.500q2 0 2 2v3.500h5.500q2.500 0 2.500 2.500v7.500z" fill="#fafafa" stroke="#3a3a3a" stroke-width="1"/>
<path d="M82 191.500h-3l-4 3.500M82 191.500v8M79 191.500v4M75 195h4" fill="none" stroke="#3a3a3a" stroke-width=".8"/>
<circle cx="190.400" cy="192" r="6.600" fill="#e8911c"/><text x="186.300" y="195.800" font-size="10.500" font-weight="bold" fill="#fff">C</text>
<circle cx="195.200" cy="196.300" r="2" fill="#fff" stroke="#333" stroke-width=".8"/>
<g fill="#f7f7f7" stroke="#1a1a1a" stroke-width="1.100" stroke-linejoin="round">
<path d="M42 211v11l8-5.500z"/><path d="M42 235v11l8-5.500z"/><path d="M42 259v11l8-5.500z"/><path d="M42 283v11l8-5.500z"/></g>
<!-- gear -->
<g transform="translate(68.400 216.300)" fill="#7a7a7a"><circle r="4.700"/><g id="teeth"><rect x="-1.500" y="-6.800" width="3" height="13.600"/><rect x="-1.500" y="-6.800" width="3" height="13.600" transform="rotate(45)"/><rect x="-1.500" y="-6.800" width="3" height="13.600" transform="rotate(90)"/><rect x="-1.500" y="-6.800" width="3" height="13.600" transform="rotate(135)"/></g><circle r="2" fill="#efefef"/></g>
<!-- folders -->
<path d="M62 233.800h6.500l1.500 2h8.500v10.200h-16.500z" fill="#8c8c8c"/><path d="M62 237h16.500" stroke="#b5b5b5" stroke-width=".8"/>
<path d="M87.200 257.800h6.500l1.500 2h8.500v10.200h-16.500z" fill="#8c8c8c"/><path d="M87.200 261h16.500" stroke="#b5b5b5" stroke-width=".8"/>
<!-- eye slash -->
<path d="M62.300 264.200c3.500-5.600 11-5.600 14.500 0-3.500 5.600-11 5.600-14.500 0z" fill="none" stroke="#9a9a9a" stroke-width=".9"/><circle cx="69.500" cy="264" r="2.700" fill="none" stroke="#9a9a9a" stroke-width=".9"/><path d="M63.500 259l12.500 10.500M65 258.500l12.500 10.500" stroke="#9a9a9a" stroke-width=".8"/>
<use href="#eye1" x="17.800" y="96.300"/>
<!-- body cube -->
<path d="M92.500 284.500h10.500v10.500h-10.500z" fill="#f2f2f2" stroke="#333" stroke-width=".9"/><path d="M92.500 284.500l3.500-3.200h11l-4 3.200z" fill="#fff" stroke="#333" stroke-width=".9"/><path d="M103 284.500l4-3.200v10.200l-4 3.500z" fill="#d0d0d0" stroke="#333" stroke-width=".9"/>
<circle cx="205.500" cy="288.300" r="5.600" fill="#fff" stroke="#1a1a1a" stroke-width="1"/><circle cx="205.500" cy="288.300" r="2.400" fill="#1a1a1a"/>
<!-- comments -->
<circle cx="288.200" cy="964.300" r="4.600" fill="#1a1a1a"/><path d="M285.600 964.300h5.200M288.200 961.700v5.200" stroke="#fff" stroke-width="1.300"/>
<!-- playback -->
<g fill="#595959">
<rect x="11.600" y="999.800" width="1.600" height="12.200"/><path d="M22.800 999.800v12.200l-9.600-6.100z"/>
<path d="M46.600 1000.800v11.200l-10-5.600z"/><rect x="47.300" y="1003.800" width="1.700" height="5.200"/>
<path d="M62.200 998.400v14.700l11.800-7.300z"/>
<rect x="86.100" y="1003.800" width="1.700" height="5.200"/><path d="M88.500 1000.800v11.200l10-5.600z"/>
<path d="M112.300 999.800v12.200l9-6.100z"/><rect x="121.200" y="999.800" width="1.600" height="12.200"/>
<path d="M257 991h12.500v2.500l-5.400 6.500v22.400h-1.700v-22.400l-5.400-6.500z"/>
</g>
<path d="M148.400 1021.300h79.400M155.600 1016v5.300M178.900 1016v5.300M203.100 1016v5.300M227.100 1016v5.300" stroke="#c4c4c4" stroke-width="1.300" fill="none"/>
<defs>
<g id="tlsk"><rect x="1.500" y="1.500" width="11.500" height="11.500" fill="#fafafa" stroke="#8a8a8a" stroke-width=".8" stroke-dasharray="4 1.500"/>
<g fill="#3a8ee0"><rect x="0" y="0" width="2.200" height="2.200"/><rect x="12" y="0" width="2.200" height="2.200"/><rect x="0" y="12" width="2.200" height="2.200"/><rect x="4" y="4" width="1.800" height="1.800"/><rect x="9.500" y="4" width="1.800" height="1.800"/><rect x="4" y="9.500" width="1.800" height="1.800"/></g>
<path d="M5 5.500v4.500M10.500 5.500c0 3-2 5-5 5M6 4.800h3.500" stroke="#666" stroke-width=".7" fill="none"/>
<path d="M6.500 14.500l1-2.800 6-6 2 2-6 6z" fill="#f5a623"/><path d="M13.500 5.700l1.200-1.200 2 2-1.200 1.200z" fill="#e8383a"/><path d="M6.500 14.500l1-2.800 1.800 1.800z" fill="#8a6a3a"/></g>
<g id="tlex"><path d="M0 12.500h10v2.800h-10z" fill="#cfcfcf"/><path d="M10 12.500l3-2.500v2.800l-3 2.500z" fill="#a8a8a8"/>
<path d="M0 3.500h10v9h-10z" fill="#5fa8e6"/><path d="M0 3.500l3-2.800h10l-3 2.800z" fill="#8fc6f2"/><path d="M10 3.500l3-2.800v9.300l-3 2.500z" fill="#3e8ccf"/>
<path d="M14.500 12.500v-11" stroke="#333" stroke-width=".9"/><path d="M14.500 0l1.500 2.800h-3z" fill="#333"/></g>
</defs>
<use href="#tlsk" x="147.200" y="996.800"/><use href="#tlex" x="171.200" y="996.800"/><use href="#tlsk" x="195.200" y="996.800"/><use href="#tlex" x="219" y="996.800"/>
<!-- settings gear -->
<g transform="translate(1179.400 1005.300)" fill="#7d7d7d"><circle r="5.300"/><rect x="-1.700" y="-7.600" width="3.400" height="15.200"/><rect x="-1.700" y="-7.600" width="3.400" height="15.200" transform="rotate(45)"/><rect x="-1.700" y="-7.600" width="3.400" height="15.200" transform="rotate(90)"/><rect x="-1.700" y="-7.600" width="3.400" height="15.200" transform="rotate(135)"/><circle r="2.500" fill="#f2f2f2"/></g>
<!-- NAV BAR -->
<g fill="#2b2b2b"><use href="#dd" x="507" y="961.300"/><use href="#dd" x="618.200" y="961.300"/><use href="#dd" x="648.300" y="961.300"/><use href="#dd" x="679.100" y="961.300"/><use href="#dd" x="710.200" y="961.300"/></g>
<!-- orbit -->
<path d="M493.700 956v14.500" stroke="#222" stroke-width="2.600"/><path d="M493.700 956.300v13.800" stroke="#f4f4f4" stroke-width="1"/><path d="M493.700 953.800l2.800 3.400h-5.600z" fill="#222"/>
<path d="M496.500 960.600c3 .4 4.800 1.300 4.800 2.500 0 1.800-3.500 3-7.600 3-2 0-3.800-.3-5.200-.8" fill="none" stroke="#222" stroke-width="1.300"/><path d="M491 961c-2.800.6-4.500 1.400-4.500 2.300" fill="none" stroke="#222" stroke-width="1.300"/><path d="M486 964.300l4.200-2.500v5z" fill="#222"/>
<!-- look at -->
<rect x="519.200" y="959.500" width="15.600" height="11.200" fill="#f8f8f8" stroke="#333" stroke-width="1.100"/><rect x="522.200" y="963.500" width="9.600" height="4.500" fill="#b8b8b8" stroke="#444" stroke-width=".8"/>
<path d="M520.500 959.500l3.500-3.500h2.500l1 1.500 5-2v4" fill="#d8d8d8" stroke="#333" stroke-width=".9"/>
<!-- hand -->
<path d="M549 963.500c-1.500-1.500-3-1.200-3.300-.3-.3.800.8 1.800 2 3.500 1.300 2 2.300 4.500 5.300 4.500h3.500c2.500 0 3.500-2 3.800-4.500l.7-6c.1-1.500-1.700-1.700-2-.3l-.5 3 .2-5.700c0-1.500-2-1.600-2.200-.1l-.3 5 -.2-6.200c0-1.500-2.100-1.500-2.200 0l-.1 6.300-.8-5.200c-.2-1.400-2.200-1.200-2.100.3l.8 8.500z" fill="#fbfbfb" stroke="#222" stroke-width=".9" stroke-linejoin="round"/>
<!-- zoom -->
<circle cx="576.300" cy="962" r="4.700" fill="#dfeaf6" stroke="#333" stroke-width="1.200"/><path d="M579.800 965.600l5 5" stroke="#333" stroke-width="2.400" stroke-linecap="round"/>
<path d="M582.500 957.300h5M585 954.800v5M582.500 961.800h5" stroke="#222" stroke-width="1" fill="none"/>
<!-- zoom fit -->
<circle cx="603.400" cy="961.700" r="5.800" fill="#f4f4f4" stroke="#333" stroke-width="1.200"/><rect x="600.600" y="958.900" width="5.600" height="5.600" fill="#e0e0e0" stroke="#333" stroke-width=".9"/><path d="M607.800 966.200l5 5" stroke="#333" stroke-width="2.400" stroke-linecap="round"/>
<!-- display -->
<rect x="630.300" y="955.500" width="15.400" height="11.500" rx="1" fill="#e8e8e8" stroke="#333" stroke-width="1"/><rect x="632.300" y="957.500" width="11.400" height="7.500" fill="#8fb4e6" stroke="#4a6ea8" stroke-width=".6"/><path d="M636 967h4v2.500h-4zM633.500 970h9" fill="#888" stroke="#555" stroke-width="1"/>
<!-- grid -->
<rect x="661.500" y="955.500" width="15.400" height="15.400" fill="#f4f4f4" stroke="#333" stroke-width=".9"/><rect x="661.500" y="963" width="15.400" height="7.900" fill="#a8b4cc" opacity=".7"/>
<path d="M664.600 955.500v15.400M667.700 955.500v15.400M670.800 955.500v15.400M673.900 955.500v15.400M661.500 958.600h15.400M661.500 961.700h15.400M661.500 964.800h15.400M661.500 967.900h15.400" stroke="#4a4a5a" stroke-width=".7"/>
<!-- viewports -->
<g fill="#a9c4ea" stroke="#2f4f86" stroke-width="1.100"><rect x="692.500" y="956.200" width="6.600" height="6.200"/><rect x="700.700" y="956.200" width="6.600" height="6.200"/><rect x="692.500" y="964.200" width="6.600" height="6.200"/><rect x="700.700" y="964.200" width="6.600" height="6.200"/></g>
<!-- VIEWCUBE -->
<defs><filter id="vcb" x="-30%" y="-30%" width="160%" height="160%"><feGaussianBlur stdDeviation="3.500"/></filter>
<linearGradient id="vcf" x1="0" y1="0" x2="0" y2="1"><stop offset="0" stop-color="#f1f1f1"/><stop offset="1" stop-color="#dcdcdc"/></linearGradient></defs>
<path d="M1103 232l34 24 36-25-6 14-30 20-32-22z" fill="#8a8a8a" opacity=".45" filter="url(#vcb)"/>
<path d="M1102.300 190.700l35.400-15.300 34.900 15.700-35 19.300z" fill="#f2f2f2" stroke="#4a4a4a" stroke-width=".8"/>
<path d="M1102.300 190.700l35.300 19.700v41.600l-31.800-22z" fill="url(#vcf)" stroke="#4a4a4a" stroke-width=".8"/>
<path d="M1137.600 210.400l35-19.300-3.400 38.200-31.600 22.700z" fill="url(#vcf)" stroke="#4a4a4a" stroke-width=".8"/>
<g font-size="9" fill="#8f949c" text-anchor="middle">
<text transform="matrix(.93 .42 -.86 .5 1136.500 193.500)" x="0" y="0" font-size="9.500">TOP</text>
<text transform="matrix(.83 .52 .08 1.080 1120 225.300)" x="0" y="0">FRONT</text>
<text transform="matrix(.84 -.52 -.08 1.080 1155 225.800)" x="0" y="0">RIGHT</text>
</g>
<path d="M1100.700 184.600l5.100 45.600" stroke="#4a4aff" stroke-width="2.200"/>
<path d="M1105.800 230.500l37 26.500" stroke="#f08a8a" stroke-width="3"/>
<text x="1094.500" y="182" font-size="14" fill="#5c5cff">Z</text>
<text x="1144" y="266.500" font-size="14" fill="#ff7676">X</text>
</svg>
<div id="border"></div>
</div></body></html>
